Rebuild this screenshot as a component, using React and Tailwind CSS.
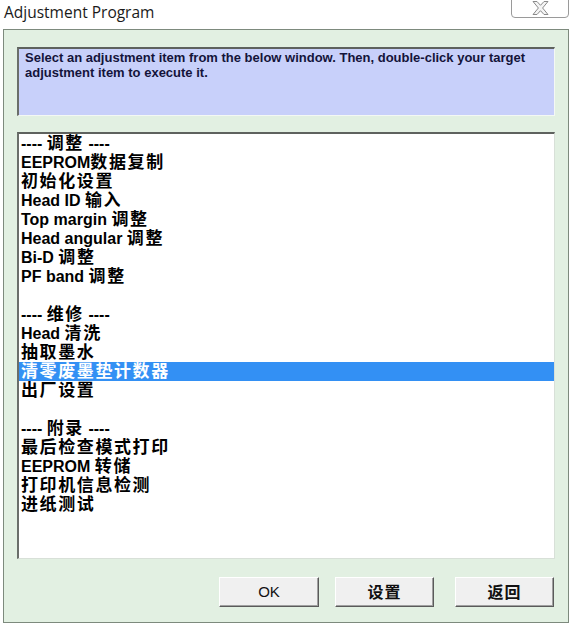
import React from "react";

const CJK = /[\u3000-\u9fff\uff00-\uffef]/;

function Mixed({ text, cjkClass = "text-[17px] tracking-[1px]" }) {
  const runs = [];
  let cur = "";
  let curCjk = null;
  for (const ch of text) {
    const c = CJK.test(ch);
    if (curCjk === null || c === curCjk) {
      cur += ch;
      curCjk = c;
    } else {
      runs.push([cur, curCjk]);
      cur = ch;
      curCjk = c;
    }
  }
  if (cur) runs.push([cur, curCjk]);
  return (
    <span className="whitespace-pre">
      {runs.map(([t, c], i) =>
        c ? (
          <span key={i} className={`${cjkClass} [font-family:'Noto_Sans_CJK_SC',sans-serif]`}>
            {t}
          </span>
        ) : (
          <span key={i}>{t}</span>
        )
      )}
    </span>
  );
}

const items = [
  "---- 调整 ----",
  "EEPROM数据复制",
  "初始化设置",
  "Head ID 输入",
  "Top margin 调整",
  "Head angular 调整",
  "Bi-D 调整",
  "PF band 调整",
  "",
  "---- 维修 ----",
  "Head 清洗",
  "抽取墨水",
  "清零废墨垫计数器",
  "出厂设置",
  "",
  "---- 附录 ----",
  "最后检查模式打印",
  "EEPROM 转储",
  "打印机信息检测",
  "进纸测试",
];

function Btn({ children, w, cls = "" }) {
  return (
    <button
      className={`h-[30px] ${w} ${cls} bg-[#f0f0f0] border border-t-white border-l-white border-r-[#5a5a5a] border-b-[#5a5a5a] shadow-[inset_-1px_-1px_0_#a0a0a0] text-[15px] leading-[16px] text-[#111] flex items-center justify-center [font-family:'Liberation_Sans','Noto_Sans_CJK_SC',sans-serif]`}
    >
      <Mixed text={children} cjkClass="text-[16px] leading-[16px] tracking-[1px] font-bold" />
    </button>
  );
}

export default function App() {
  return (
    <div className="w-[572px] h-[626px] bg-white relative overflow-hidden [font-family:'Liberation_Sans','Noto_Sans_CJK_SC',sans-serif]">
      {/* title bar */}
      <div className="h-[29px] flex items-start">
        <div className="pl-[4px] pt-[1px] text-[15.5px] text-[#1a1a1a] [font-family:'Open_Sans',sans-serif]">
          Adjustment Program
        </div>
      </div>
      <div className="absolute left-[511px] top-[-2px] w-[58px] h-[20px] border border-[#9a9a9a] rounded-b-[4px] bg-white flex items-center justify-center">
        <svg width="17" height="14" viewBox="0 0 17 14">
          <path
            d="M1 0.5 L5 0.5 L8.5 4.3 L12 0.5 L16 0.5 L10.6 7 L16 13.5 L12 13.5 L8.5 9.7 L5 13.5 L1 13.5 L6.4 7 Z"
            fill="#f4f4f4"
            stroke="#8a8a8a"
            strokeWidth="1"
            strokeLinejoin="round"
          />
        </svg>
      </div>

      {/* main panel */}
      <div className="ml-[3px] w-[566px] h-[594px] bg-[#e2f0e2] border border-[#7d8a7d] pl-[13px] pr-[13px] pt-[17px] flex flex-col">
        <div className="h-[69px] w-[538px] bg-[#c8d0fa] border-t-2 border-l-2 border-t-[#5e625e] border-l-[#6a6e6a] border-r border-b border-r-[#f4f8f4] border-b-[#f4f8f4] pl-[6px] pt-[1px] text-[13px] leading-[15px] font-bold text-[#14143a]">
          Select an adjustment item from the below window. Then, double-click your target
          <br />
          adjustment item to execute it.
        </div>
        <div className="mt-[16px] h-[427px] w-[538px] bg-white border-t-2 border-l-2 border-t-[#5e625e] border-l-[#6a6e6a] border-r border-b border-r-[#d8e0d8] border-b-[#d8e0d8] flex flex-col">
          {items.map((t, i) => (
            <div
              key={i}
              className={`block h-[19px] shrink-0 pl-[2px] text-[16px] leading-[16px] font-bold whitespace-nowrap ${
                i === 12 ? "bg-[#3390f4] text-white" : "text-black"
              }`}
            >
              <Mixed text={t} cjkClass="text-[17px] leading-[16px] tracking-[1.6px]" />
            </div>
          ))}
        </div>
        <div className="mt-[18px] flex">
          <Btn w="w-[100px]" cls="ml-[202px]">OK</Btn>
          <Btn w="w-[99px]" cls="ml-[16px]">设置</Btn>
          <Btn w="w-[99px]" cls="ml-[21px]">返回</Btn>
        </div>
      </div>
    </div>
  );
}
